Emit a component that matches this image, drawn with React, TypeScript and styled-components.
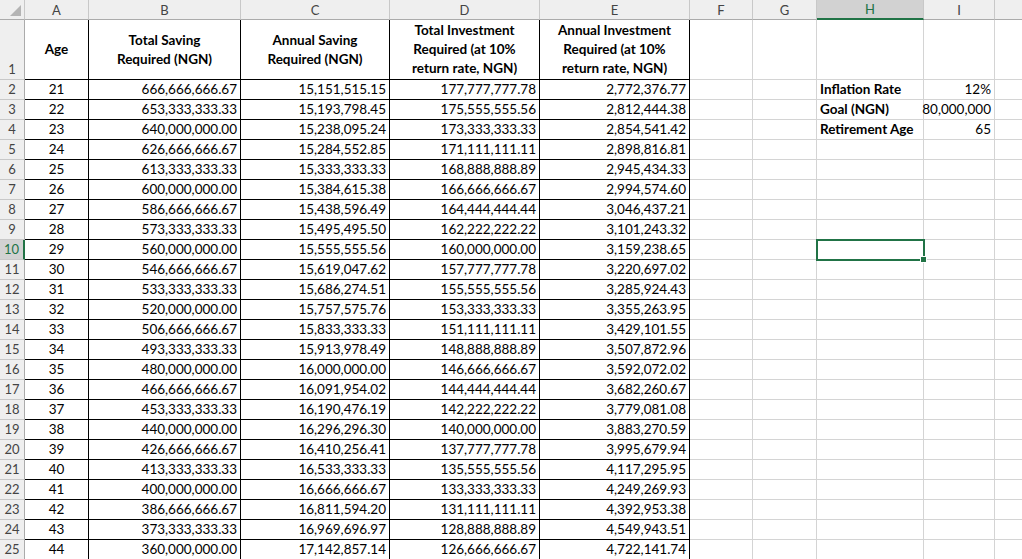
import React from "react";
import styled, { createGlobalStyle } from "styled-components";

const G = createGlobalStyle`
  html,body{margin:0;padding:0;background:#fff;overflow:hidden;}
  body{font-family:Lato,"Open Sans",sans-serif;}
`;

const widths = [25, 64, 152, 149, 150, 150, 63, 64, 107, 71, 40];
const Sheet = styled.div`
  display:grid;
  grid-template-columns:${widths.map((w) => w + "px").join(" ")};
  grid-template-rows:20px 60px repeat(24, 20px);
  width:1022px;
  overflow:hidden;
`;
const ColHead = styled.div<{ $sel?: boolean }>`
  box-sizing:border-box;
  background:${(p) => (p.$sel ? "#d2d2d2" : "#efefef")};
  border-right:1px solid #c8c8c8;
  border-bottom:${(p) => (p.$sel ? "2px solid #217346" : "1px solid #ababab")};
  color:${(p) => (p.$sel ? "#217346" : "#444")};
  font-size:13px;
  display:flex;align-items:center;justify-content:center;
`;
const Corner = styled(ColHead)`
  position:relative;
  &::after{content:"";position:absolute;right:3px;bottom:3px;border-left:11px solid transparent;border-bottom:11px solid #b4b4b4;}
`;
const RowHead = styled.div<{ $sel?: boolean }>`
  box-sizing:border-box;
  background:${(p) => (p.$sel ? "#d2d2d2" : "#efefef")};
  border-bottom:1px solid #c8c8c8;
  border-right:${(p) => (p.$sel ? "2px solid #217346" : "1px solid #ababab")};
  color:${(p) => (p.$sel ? "#217346" : "#444")};
  font-size:13px;
  display:flex;align-items:flex-end;justify-content:center;padding-bottom:2px;
`;
const Cell = styled.div<{ $align?: string; $bold?: boolean; $dark?: boolean; $head?: boolean; $sel?: boolean }>`
  box-sizing:border-box;
  position:relative;
  border-right:1px solid ${(p) => (p.$dark ? "#000" : "#d4d4d4")};
  border-bottom:1px solid ${(p) => (p.$dark ? "#000" : "#d4d4d4")};
  font-size:13.5px;
  font-weight:${(p) => (p.$bold ? 700 : 400)};
  color:#000;
  display:flex;
  align-items:${(p) => (p.$head ? "center" : "flex-end")};
  justify-content:${(p) => p.$align === "right" ? "flex-end" : p.$align === "center" ? "center" : "flex-start"};
  text-align:${(p) => p.$align || "left"};
  line-height:${(p) => (p.$head ? "19px" : "18px")};
  padding:${(p) => (p.$head ? "0 12px" : "0 3px 1px")};
  white-space:${(p) => (p.$head ? "normal" : "nowrap")};
  ${(p) => p.$sel && `outline:2px solid #217346;outline-offset:-1px;z-index:2;
    &::after{content:"";position:absolute;right:-4px;bottom:-4px;width:5px;height:5px;background:#217346;border:1px solid #fff;}`}
`;

const B = ["666,666,666.67","653,333,333.33","640,000,000.00","626,666,666.67","613,333,333.33","600,000,000.00","586,666,666.67","573,333,333.33","560,000,000.00","546,666,666.67","533,333,333.33","520,000,000.00","506,666,666.67","493,333,333.33","480,000,000.00","466,666,666.67","453,333,333.33","440,000,000.00","426,666,666.67","413,333,333.33","400,000,000.00","386,666,666.67","373,333,333.33","360,000,000.00"];
const C = ["15,151,515.15","15,193,798.45","15,238,095.24","15,284,552.85","15,333,333.33","15,384,615.38","15,438,596.49","15,495,495.50","15,555,555.56","15,619,047.62","15,686,274.51","15,757,575.76","15,833,333.33","15,913,978.49","16,000,000.00","16,091,954.02","16,190,476.19","16,296,296.30","16,410,256.41","16,533,333.33","16,666,666.67","16,811,594.20","16,969,696.97","17,142,857.14"];
const D = ["177,777,777.78","175,555,555.56","173,333,333.33","171,111,111.11","168,888,888.89","166,666,666.67","164,444,444.44","162,222,222.22","160,000,000.00","157,777,777.78","155,555,555.56","153,333,333.33","151,111,111.11","148,888,888.89","146,666,666.67","144,444,444.44","142,222,222.22","140,000,000.00","137,777,777.78","135,555,555.56","133,333,333.33","131,111,111.11","128,888,888.89","126,666,666.67"];
const E = ["2,772,376.77","2,812,444.38","2,854,541.42","2,898,816.81","2,945,434.33","2,994,574.60","3,046,437.21","3,101,243.32","3,159,238.65","3,220,697.02","3,285,924.43","3,355,263.95","3,429,101.55","3,507,872.96","3,592,072.02","3,682,260.67","3,779,081.08","3,883,270.59","3,995,679.94","4,117,295.95","4,249,269.93","4,392,953.38","4,549,943.51","4,722,141.74"];
const side: Record<number, [string, string]> = { 0: ["Inflation Rate", "12%"], 1: ["Goal (NGN)", "80,000,000"], 2: ["Retirement Age", "65"] };

export default function App() {
  const letters = ["A", "B", "C", "D", "E", "F", "G", "H", "I", ""];
  return (
    <>
      <G />
      <Sheet>
        <Corner />
        {letters.map((l, i) => <ColHead key={i} $sel={l === "H"}>{l}</ColHead>)}
        <RowHead>1</RowHead>
        <Cell $dark $bold $head $align="center">Age</Cell>
        <Cell $dark $bold $head $align="center">Total Saving Required (NGN)</Cell>
        <Cell $dark $bold $head $align="center">Annual Saving Required (NGN)</Cell>
        <Cell $dark $bold $head $align="center">Total Investment Required (at 10% return rate, NGN)</Cell>
        <Cell $dark $bold $head $align="center">Annual Investment Required (at 10% return rate, NGN)</Cell>
        {[0, 1, 2, 3, 4].map((k) => <Cell key={k} />)}
        {B.map((b, i) => (
          <React.Fragment key={i}>
            <RowHead $sel={i === 8}>{i + 2}</RowHead>
            <Cell $dark $align="center">{21 + i}</Cell>
            <Cell $dark $align="right">{b}</Cell>
            <Cell $dark $align="right">{C[i]}</Cell>
            <Cell $dark $align="right">{D[i]}</Cell>
            <Cell $dark $align="right">{E[i]}</Cell>
            <Cell />
            <Cell />
            <Cell $bold $sel={i === 8}>{side[i]?.[0]}</Cell>
            <Cell $align="right">{side[i]?.[1]}</Cell>
            <Cell />
          </React.Fragment>
        ))}
      </Sheet>
    </>
  );
}
